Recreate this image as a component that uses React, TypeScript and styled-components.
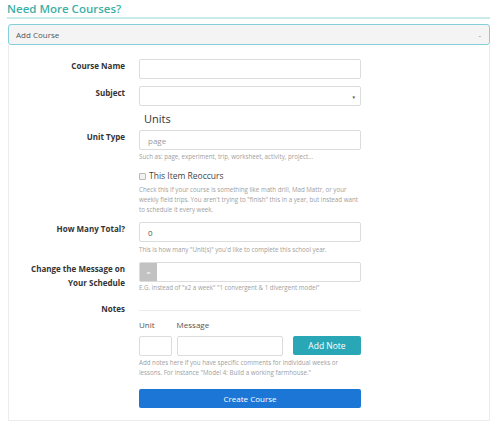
import styled, { createGlobalStyle } from "styled-components";

const GlobalStyle = createGlobalStyle`
  body {
    margin: 0;
    background: #ffffff;
    font-family: "Open Sans", "Noto Sans", sans-serif;
    color: #333333;
  }
`;

const Page = styled.div`
  width: 500px;
  padding: 1px 10px 0 8px;
  box-sizing: border-box;
`;

const Title = styled.h2`
  margin: 0 0 5px -1px;
  font-size: 11.5px;
  line-height: 16px;
  font-weight: 600;
  color: #3bb0a7;
  border-bottom: 2px solid #c8ebea;
`;

const AccordionHeader = styled.div`
  box-sizing: border-box;
  display: flex;
  align-items: center;
  justify-content: space-between;
  height: 21px;
  padding: 0 8px 0 7px;
  background: #f4f4f4;
  border: 1px solid #86cfd8;
  border-radius: 3px;
  font-size: 8px;
  color: #555555;
`;

const Toggle = styled.span`
  color: #888888;
  font-size: 8px;
`;

const Panel = styled.div`
  border: 1px solid #ececec;
  border-top: none;
  padding: 14px 0 12px;
`;

const Row = styled.div<{ gap?: number }>`
  display: grid;
  grid-template-columns: 116px 222px;
  column-gap: 14px;
  margin-top: ${(props) => props.gap ?? 0}px;
`;

const Label = styled.div`
  text-align: right;
  font-weight: 700;
  font-size: 8px;
  line-height: 14px;
  color: #333333;
`;

const Field = styled.div`
  display: flex;
  flex-direction: column;
`;

const Input = styled.div<{ width?: number; placeholder?: boolean }>`
  box-sizing: border-box;
  height: 20px;
  width: ${(props) => (props.width ? `${props.width}px` : "100%")};
  border: 1px solid #dcdcdc;
  border-radius: 2px;
  background: #ffffff;
  display: flex;
  align-items: center;
  padding: 0 8px;
  font-size: 8px;
  color: ${(props) => (props.placeholder ? "#9a9a9a" : "#555555")};
  position: relative;
`;

const SelectArrow = styled.span`
  position: absolute;
  right: 4px;
  top: 7px;
  font-size: 4.5px;
  color: #555555;
`;

const Addon = styled.span`
  width: 17px;
  height: 100%;
  margin-left: -8px;
  background: #c2c2c2;
  color: #ffffff;
  display: flex;
  align-items: center;
  justify-content: center;
  font-size: 7px;
`;

const Heading = styled.div`
  margin-top: 6px;
  padding-left: 5px;
  font-size: 11px;
  line-height: 14px;
  color: #333333;
`;

const Help = styled.div<{ gap?: number }>`
  margin-top: ${(props) => props.gap ?? 2}px;
  font-size: 6.2px;
  line-height: 10px;
  color: #a0a0a0;
`;

const CheckRow = styled.label`
  display: flex;
  align-items: center;
  gap: 3px;
  margin-top: 8px;
  font-size: 8.5px;
  line-height: 12px;
  color: #444444;
`;

const Box = styled.span`
  width: 5px;
  height: 5px;
  border: 1px solid #b8b8b8;
  background: #f2f2f2;
  border-radius: 1px;
`;

const Divider = styled.div`
  margin-top: 8px;
  border-top: 1px solid #ececec;
`;

const NoteHeads = styled.div`
  display: flex;
  gap: 22px;
  margin-top: 8px;
  font-size: 8px;
  line-height: 12px;
  color: #555555;
`;

const NoteInputs = styled.div`
  display: flex;
  gap: 5px;
  margin-top: 5px;
  align-items: flex-start;
`;

const Button = styled.button<{ color: string; width?: number; size?: number }>`
  box-sizing: border-box;
  height: 19px;
  width: ${(props) => (props.width ? `${props.width}px` : "100%")};
  border: none;
  border-radius: 2px;
  background: ${(props) => props.color};
  color: #ffffff;
  font-family: "Open Sans", "Noto Sans", sans-serif;
  font-size: ${(props) => props.size ?? 8}px;
  padding: 0;
`;

const Spacer = styled.div`
  margin-left: auto;
`;

export default function App() {
  return (
    <Page>
      <GlobalStyle />
      <Title>Need More Courses?</Title>
      <AccordionHeader>
        <span>Add Course</span>
        <Toggle>-</Toggle>
      </AccordionHeader>
      <Panel>
        <Row>
          <Label>Course Name</Label>
          <Field>
            <Input />
          </Field>
        </Row>
        <Row gap={7}>
          <Label>Subject</Label>
          <Field>
            <Input>
              <SelectArrow>▼</SelectArrow>
            </Input>
          </Field>
        </Row>
        <Row>
          <Label />
          <Heading>Units</Heading>
        </Row>
        <Row gap={4}>
          <Label>Unit Type</Label>
          <Field>
            <Input placeholder>page</Input>
            <Help>Such as: page, experiment, trip, worksheet, activity, project...</Help>
            <CheckRow>
              <Box />
              This Item Reoccurs
            </CheckRow>
            <Help gap={3}>
              Check this if your course is something like math drill, Mad Mattr, or your
              weekly field trips. You aren't trying to "finish" this in a year, but instead want
              to schedule it every week.
            </Help>
          </Field>
        </Row>
        <Row gap={7}>
          <Label>How Many Total?</Label>
          <Field>
            <Input>0</Input>
            <Help gap={3}>This is how many "Unit(s)" you'd like to complete this school year.</Help>
          </Field>
        </Row>
        <Row gap={7}>
          <Label>
            Change the Message on
            <br />
            Your Schedule
          </Label>
          <Field>
            <Input>
              <Addon>=</Addon>
            </Input>
            <Help gap={1}>E.G. instead of "x2 a week" "1 convergent &amp; 1 divergent model"</Help>
          </Field>
        </Row>
        <Row gap={9}>
          <Label>Notes</Label>
          <Field>
            <Divider />
            <NoteHeads>
              <span>Unit</span>
              <span>Message</span>
            </NoteHeads>
            <NoteInputs>
              <Input width={33} />
              <Input width={109} />
              <Spacer />
              <Button color="#2aa7b6" width={70} size={8.5}>
                Add Note
              </Button>
            </NoteInputs>
            <Help gap={2}>
              Add notes here if you have specific comments for individual weeks or
              <br />
              lessons. For instance "Model 4: Build a working farmhouse."
            </Help>
            <Button color="#1b76d6" style={{ marginTop: 11 }}>
              Create Course
            </Button>
          </Field>
        </Row>
      </Panel>
    </Page>
  );
}
